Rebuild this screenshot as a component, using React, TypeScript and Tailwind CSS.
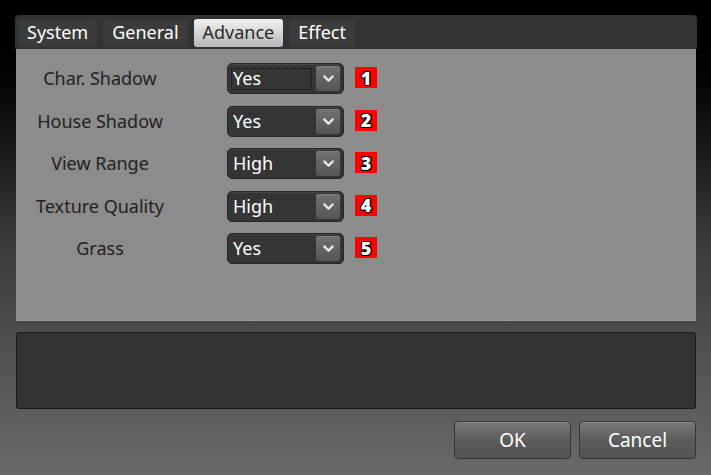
import { ChevronDown } from "lucide-react";

const tabs = ["System", "General", "Advance", "Effect"];

const options = [
  { label: "Char. Shadow", value: "Yes", n: "1", focused: true },
  { label: "House Shadow", value: "Yes", n: "2" },
  { label: "View Range", value: "High", n: "3" },
  { label: "Texture Quality", value: "High", n: "4" },
  { label: "Grass", value: "Yes", n: "5" },
];

function Select({ value, focused }: { value: string; focused?: boolean }) {
  return (
    <div className="flex h-[31px] w-[117px] items-center rounded-[5px] border border-[#262626] bg-[#353535] pl-[3px] pr-[3px] shadow-[inset_0_1px_0_#444]">
      <div
        className={`flex h-[22px] flex-1 items-center pl-[1px] text-[18px] text-white ${
          focused ? "border border-dotted border-[#111]" : "border border-transparent"
        }`}
      >
        {value}
      </div>
      <div className="ml-[4px] flex h-[25px] w-[24px] items-center justify-center rounded-[3px] bg-gradient-to-b from-[#727272] to-[#555] shadow-[inset_0_1px_0_#808080]">
        <ChevronDown size={17} strokeWidth={3} color="#eaeaea" />
      </div>
    </div>
  );
}

function Badge({ n }: { n: string }) {
  return (
    <div
      className="flex h-[21px] w-[22px] items-center justify-center bg-[#f00] text-[18px] font-black leading-none text-white"
      style={{
        textShadow:
          "1px 0 0 #000, -1px 0 0 #000, 0 1px 0 #000, 0 -1px 0 #000, 1px 1px 0 #000, -1px -1px 0 #000, 1px -1px 0 #000, -1px 1px 0 #000",
      }}
    >
      {n}
    </div>
  );
}

export default function App() {
  return (
    <div
      className="flex h-[475px] w-[711px] flex-col bg-gradient-to-b from-[#000] via-[#3a3a3a] to-[#6a6a6a] px-[15px] pt-[15px]"
      style={{ fontFamily: '"Noto Sans", "Open Sans", sans-serif' }}
    >
      {/* Tabs */}
      <div className="flex h-[34px] w-[682px] items-center gap-[6px] rounded-t-[4px] bg-[#333] px-[3px] pt-[1px]">
        {tabs.map((t) => (
          <div
            key={t}
            className={`flex h-[28px] items-center rounded-[3px] px-[9px] text-[18px] ${
              t === "Advance"
                ? "bg-gradient-to-b from-[#f2f2f2] to-[#b8b8b8] text-[#2a2a2a]"
                : "bg-[#3b3b3b] text-white"
            }`}
          >
            {t}
          </div>
        ))}
      </div>

      {/* Options */}
      <div className="ml-[1px] flex h-[272px] w-[680px] flex-col border-b border-[#9a9a9a] bg-[#8c8c8c] pt-[14px]">
        {options.map((o) => (
          <div key={o.label} className="flex h-[42.5px] items-start">
            <div className="w-[168px] text-center text-[18px] leading-[30px] text-[#222]">
              {o.label}
            </div>
            <div className="ml-[43px]">
              <Select value={o.value} focused={o.focused} />
            </div>
            <div className="ml-[11px] mt-[4px]">
              <Badge n={o.n} />
            </div>
          </div>
        ))}
      </div>

      {/* Message area */}
      <div className="ml-[1px] mt-[11px] h-[77px] w-[680px] rounded-[3px] border border-[#1a1a1a] bg-[#333]" />

      {/* Buttons */}
      <div className="mt-[12px] flex w-[681px] justify-end gap-[8px]">
        {["OK", "Cancel"].map((b) => (
          <button
            key={b}
            className="flex h-[38px] w-[117px] items-center justify-center rounded-[4px] border border-[#363636] bg-gradient-to-b from-[#7a7a7a] via-[#5c5c5c] to-[#535353] text-[19px] text-white shadow-[inset_0_1px_0_#8a8a8a]"
          >
            {b}
          </button>
        ))}
      </div>
    </div>
  );
}
